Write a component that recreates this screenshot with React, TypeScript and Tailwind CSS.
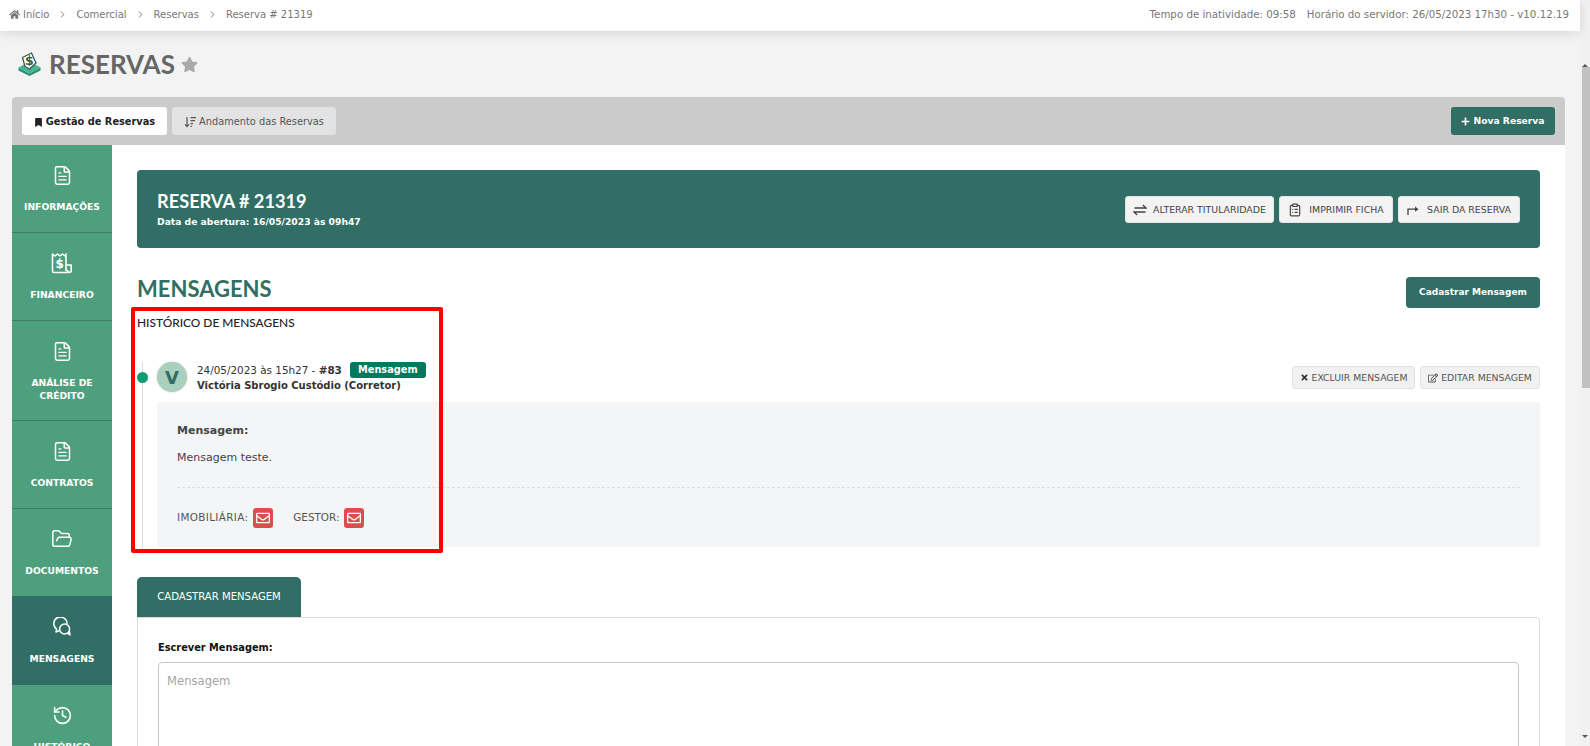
import { ChevronRight, FileText, FolderOpen, History, ClipboardList } from "lucide-react";
import { FaBookmark, FaHome, FaPlus, FaRegEdit, FaRegEnvelope, FaStar, FaTimes } from "react-icons/fa";
import type { ReactNode } from "react";

function ReceiptIcon() {
  return (
    <svg width="22" height="23" viewBox="0 0 22 23" fill="none" stroke="currentColor" strokeWidth="1.6" strokeLinejoin="round" strokeLinecap="round">
      <path d="M16 20.5H3a1.5 1.5 0 0 1-1.5-1.5V2l2.5 2 2.5-2 2.5 2 2.5-2 2.5 2 1-2v16.5" />
      <path d="M16 13h4.2v5.5a1.9 1.9 0 0 1-3.8 0" />
      <text x="8.7" y="15.5" fontSize="12" fontWeight="700" fill="currentColor" stroke="none" textAnchor="middle" fontFamily="'DejaVu Sans', sans-serif">$</text>
    </svg>
  );
}

function ChatsIcon() {
  return (
    <svg width="20" height="20" viewBox="0 0 20 20" fill="none" stroke="currentColor" strokeWidth="1.5" strokeLinecap="round" strokeLinejoin="round">
      <path d="M7.5 13.5 4 15l.6-3A6.6 6.6 0 1 1 15 6.5" />
      <circle cx="12.6" cy="12" r="5" />
      <path d="M15.5 16.2 18 18l-.6-3.4" />
    </svg>
  );
}

function SortIcon() {
  return (
    <svg width="12" height="12" viewBox="0 0 12 12" fill="none" stroke="currentColor" strokeWidth="1.2">
      <path d="M3 1v9.5M1 8.4l2 2.2 2-2.2" />
      <path d="M6.5 1.6H12M6.5 4.6H11M6.5 7.6H9M6.5 10.4H7.8" />
    </svg>
  );
}

function SwapIcon() {
  return (
    <svg width="14" height="12" viewBox="0 0 14 12" fill="none" stroke="currentColor" strokeWidth="1.3">
      <path d="M1.5 4H13L9.8 1" />
      <path d="M12.5 8H1L4.2 11" />
    </svg>
  );
}

function ExitIcon() {
  return (
    <svg width="12" height="10" viewBox="0 0 12 10" fill="none" stroke="currentColor" strokeWidth="1.3">
      <path d="M1 10V4.2h8" />
      <path d="M8 1.6 11.5 4.2 8 6.8z" fill="currentColor" stroke="none" />
    </svg>
  );
}

function Logo() {
  return (
    <svg width="23" height="24" viewBox="0 0 23 24">
      <path d="M0.5 15.5 11.5 21.5 22.5 15.5 22.5 18.5 11.5 24 0.5 18.5z" fill="#2b8f78" />
      <path d="M0.5 15.5 11.5 9.5 22.5 15.5 11.5 21.5z" fill="#45b491" />
      <path d="M7 14.5 4.5 5.5 13.5 1 18 11 11.5 17z" fill="#fff" stroke="#3c5a54" strokeWidth="1.3" strokeLinejoin="round" />
      <text x="11.4" y="13.2" fontSize="12.5" fontWeight="700" fill="#3c5a54" textAnchor="middle" fontFamily="'DejaVu Sans', sans-serif">$</text>
    </svg>
  );
}

const menu: { label: ReactNode; icon: ReactNode; h: string; active?: boolean; noBorder?: boolean }[] = [
  { label: "INFORMAÇÕES", icon: <FileText size={21} strokeWidth={1.7} />, h: "h-[88px]" },
  { label: "FINANCEIRO", icon: <ReceiptIcon />, h: "h-[88px]" },
  { label: <>ANÁLISE DE<br />CRÉDITO</>, icon: <FileText size={21} strokeWidth={1.7} />, h: "h-[100px]" },
  { label: "CONTRATOS", icon: <FileText size={21} strokeWidth={1.7} />, h: "h-[88px]" },
  { label: "DOCUMENTOS", icon: <FolderOpen size={22} strokeWidth={1.6} />, h: "h-[87px]", noBorder: true },
  { label: "MENSAGENS", icon: <ChatsIcon />, h: "h-[89px]", active: true, noBorder: true },
  { label: "HISTÓRICO", icon: <History size={21} strokeWidth={1.8} />, h: "h-[88px]" },
];

function Crumb({ children }: { children: ReactNode }) {
  return <span className="text-[#777]">{children}</span>;
}

function LightButton({ icon, children, className }: { icon: ReactNode; children: ReactNode; className: string }) {
  return (
    <button className={`flex items-center justify-center h-[27px] pt-[2px] rounded-[3px] bg-[#f3f3f3] border border-[#e4e4e4] text-[9.4px] text-[#444] ${className}`}>
      {icon}
      {children}
    </button>
  );
}

export default function App() {
  return (
    <div className="flex h-[746px] overflow-hidden bg-[#f3f3f3] text-[#333] font-['DejaVu_Sans',sans-serif]">
      <div className="w-[1580px] shrink-0 flex flex-col">
        {/* top bar */}
        <div className="h-[31px] shrink-0 pb-[2px] bg-white shadow-[0_2px_12px_rgba(0,0,0,0.12)] flex items-center justify-between pl-[9px] pr-[11px] text-[#777] relative">
          <div className="flex items-center text-[10px]">
            <FaHome size={11} className="text-[#777] mr-[3px]" />
            <Crumb>Início</Crumb>
            <ChevronRight size={11} className="mx-[8px] text-[#777]" />
            <Crumb>Comercial</Crumb>
            <ChevronRight size={11} className="mx-[8px] text-[#777]" />
            <Crumb>Reservas</Crumb>
            <ChevronRight size={11} className="mx-[8px] text-[#777]" />
            <Crumb>Reserva # 21319</Crumb>
          </div>
          <div className="flex gap-[11px] text-[10.25px]">
            <span>Tempo de inatividade: 09:58</span>
            <span>Horário do servidor: 26/05/2023 17h30 - v10.12.19</span>
          </div>
        </div>

        {/* page title */}
        <div className="h-[66px] shrink-0 flex items-center pl-[18px] font-['Lato',sans-serif]">
          <Logo />
          <h1 className="ml-[8px] text-[26px] font-bold text-[#666] leading-none">RESERVAS</h1>
          <FaStar size={17} className="ml-[6px] text-[#a9a9a9]" />
        </div>

        {/* panel */}
        <div className="ml-3 w-[1553px] flex-1 min-h-0 flex flex-col">
          <div className="h-[48px] shrink-0 bg-[#cbcbcb] rounded-t-[4px] flex items-center pl-[10px] pr-[10px] text-[9.8px]">
            <button className="h-[28px] w-[145px] pt-[2px] rounded-[3px] bg-white flex items-center justify-center font-bold text-[#222]">
              <FaBookmark size={9} className="mr-[3px]" />
              Gestão de Reservas
            </button>
            <button className="ml-[5px] h-[28px] w-[164px] pt-[2px] rounded-[3px] bg-[#e3e3e3] flex items-center justify-center text-[#555]">
              <span className="mr-[3px]"><SortIcon /></span>
              Andamento das Reservas
            </button>
            <button className="ml-auto h-[28px] w-[104px] rounded-[3px] bg-[#316e65] text-white text-[9.2px] font-bold flex items-center justify-center">
              <FaPlus size={9} className="mr-[3px]" />
              Nova Reserva
            </button>
          </div>

          <div className="flex flex-1 min-h-0 bg-white">
            {/* side menu */}
            <nav className="w-[100px] shrink-0 flex flex-col text-white">
              {menu.map((item, i) => (
                <div
                  key={i}
                  className={`${item.h} shrink-0 flex flex-col items-center text-center text-[9.2px] font-bold leading-[13px] ${item.active ? "pt-[19px] bg-[#316e65]" : "pt-[18px] bg-[#4e9f7e]"} ${item.noBorder ? "" : "border-b border-[#3f7d69]"}`}
                >
                  <div className="h-[24px] flex items-center justify-center">{item.icon}</div>
                  <div className="mt-[13px]">{item.label}</div>
                </div>
              ))}
            </nav>

            {/* content */}
            <main className="flex-1 min-w-0 pl-[25px] pr-[25px] pt-[25px] relative">
              <div className="h-[78px] bg-[#316e65] rounded-[4px] flex items-center justify-between pl-[20px] pr-[20px] text-white">
                <div>
                  <div className="font-['Lato',sans-serif] font-bold text-[18.2px] leading-[23px]">RESERVA # 21319</div>
                  <div className="text-[9.2px] font-bold leading-[14px] mt-[2px]">Data de abertura: 16/05/2023 às 09h47</div>
                </div>
                <div className="flex gap-[5px]">
                  <LightButton className="w-[149px]" icon={<span className="mr-[6px]"><SwapIcon /></span>}>ALTERAR TITULARIDADE</LightButton>
                  <LightButton className="w-[114px]" icon={<ClipboardList size={14} className="mr-[7px]" />}>IMPRIMIR FICHA</LightButton>
                  <LightButton className="w-[122px]" icon={<span className="mr-[8px]"><ExitIcon /></span>}>SAIR DA RESERVA</LightButton>
                </div>
              </div>

              <div className="mt-[29px] h-[31px] flex items-start justify-between">
                <h2 className="font-['Lato',sans-serif] font-bold text-[22px] text-[#316e65] leading-[22px] mt-[1px]">MENSAGENS</h2>
                <button className="w-[134px] h-[31px] rounded-[4px] bg-[#316e65] text-white text-[9px] font-bold">Cadastrar Mensagem</button>
              </div>

              <div className="mt-[7px] font-['Lato',sans-serif] text-[11.9px] font-medium leading-[16px] text-[#222]">HISTÓRICO DE MENSAGENS</div>

              {/* timeline */}
              <div className="mt-[31px] ml-[5px] pb-[8px] border-l border-[#dcdcdc] pl-[14px] relative">
                <span className="absolute left-[-6px] top-[10px] w-[11px] h-[11px] rounded-full bg-[#0c9d77]" />
                <div className="flex items-start h-[40px]">
                  <div className="w-[30px] h-[30px] rounded-full bg-[#a9cfbd] flex items-center justify-center text-[#316e65] font-bold text-[18px] shadow-[0_0_2px_rgba(0,0,0,0.25)]">V</div>
                  <div className="ml-[10px] leading-[14px]">
                    <div className="flex items-center h-[16px] text-[10.4px]">
                      <span>24/05/2023 às 15h27 - <b>#83</b></span>
                      <span className="ml-[8px] w-[76px] h-[16px] rounded-[3px] bg-[#007a5e] text-[9.8px] text-white font-bold flex items-center justify-center">Mensagem</span>
                    </div>
                    <div className="font-bold text-[10px] mt-[1px]">Victória Sbrogio Custódio (Corretor)</div>
                  </div>
                  <div className="ml-auto mt-[4px] flex gap-[5px] text-[9.3px] text-[#555]">
                    <button className="w-[123px] h-[23px] rounded-[3px] bg-[#f1f1f1] border border-[#e2e2e2] flex items-center justify-center">
                      <FaTimes size={9} className="mr-[3px] text-[#333]" />
                      EXCLUIR MENSAGEM
                    </button>
                    <button className="w-[120px] h-[23px] rounded-[3px] bg-[#f1f1f1] border border-[#e2e2e2] flex items-center justify-center">
                      <FaRegEdit size={10} className="mr-[3px]" />
                      EDITAR MENSAGEM
                    </button>
                  </div>
                </div>
                <div className="h-[145px] bg-[#f4f5f7] rounded-[4px] pl-[20px] pr-[20px] pt-[21px]">
                  <div className="text-[11px] font-bold text-[#444] leading-[16px]">Mensagem:</div>
                  <div className="text-[11px] text-[#444] leading-[16px] mt-[11px]">Mensagem teste.</div>
                  <div className="mt-[21px] border-t border-dashed border-[#dcdcdc]" />
                  <div className="mt-[20px] flex items-center text-[10.4px] text-[#555]">
                    <span className="tracking-[0.35px]">IMOBILIÁRIA:</span>
                    <span className="ml-[5px] w-[20px] h-[20px] rounded-[3px] bg-[#dc4d4d] flex items-center justify-center text-white"><FaRegEnvelope size={14} /></span>
                    <span className="ml-[20px]">GESTOR:</span>
                    <span className="ml-[5px] w-[20px] h-[20px] rounded-[3px] bg-[#dc4d4d] flex items-center justify-center text-white"><FaRegEnvelope size={14} /></span>
                  </div>
                </div>
              </div>

              {/* form */}
              <div className="mt-[22px] w-[164px] h-[40px] rounded-t-[5px] bg-[#316e65] text-white text-[10.1px] flex items-center justify-center">CADASTRAR MENSAGEM</div>
              <div className="h-[200px] border border-[#dcdcdc] rounded-tr-[4px] pl-[20px] pr-[20px] pt-[23px]">
                <div className="text-[9.8px] font-bold text-[#111] leading-[14px]">Escrever Mensagem:</div>
                <textarea placeholder="Mensagem" className="block mt-[7px] w-full h-[140px] border border-[#c8c8c8] rounded-[4px] px-[8px] py-[10px] text-[11.6px] placeholder:text-[#a5a5a5]" />
              </div>

              {/* destaque */}
              <div className="absolute left-[19px] top-[162px] w-[312px] h-[246px] border-4 border-[#ff0000] rounded-[2px] pointer-events-none" />
            </main>
          </div>
        </div>
      </div>

      {/* scrollbar */}
      <div className="w-[10px] shrink-0 bg-[#f1f1f1] flex flex-col">
        <div className="h-[67px] shrink-0 pt-[8px] flex justify-center"><span className="border-x-[3px] border-x-transparent border-b-[3px] border-b-[#555]" /></div>
        <div className="h-[321px] shrink-0 ml-[2px] bg-[#c1c1c1]" />
        <div className="flex-1" />
        <div className="h-[11px] shrink-0 flex justify-center"><span className="border-x-[3px] border-x-transparent border-t-[3px] border-t-[#555]" /></div>
      </div>
    </div>
  );
}
